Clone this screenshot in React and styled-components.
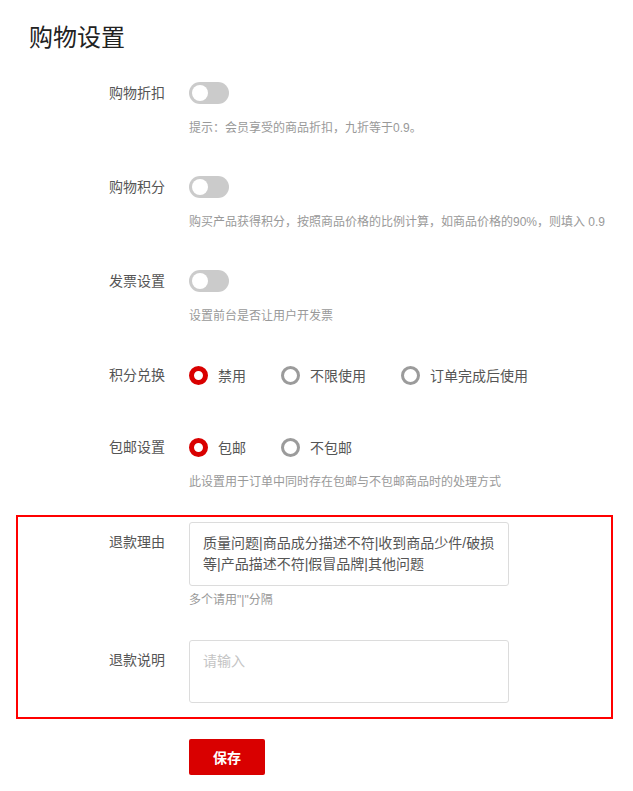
import React from "react";
import styled, { createGlobalStyle } from "styled-components";

const GlobalStyle = createGlobalStyle`
  html, body {
    margin: 0;
    padding: 0;
    background: #fff;
  }
  body {
    font-family: "Liberation Sans", "Noto Sans CJK SC", sans-serif;
  }
`;

const red = "#d90000";

const Page = styled.div`
  width: 633px;
  box-sizing: border-box;
  padding: 22px 20px 16px 16px;
`;

const Title = styled.h1`
  margin: 0 0 23px;
  padding-left: 13px;
  font-size: 24px;
  line-height: 32px;
  font-weight: normal;
  color: #222;
`;

const FormItem = styled.div`
  display: flex;
  align-items: flex-start;
  margin-bottom: ${(p) => (p.$mb !== undefined ? p.$mb : 40)}px;
`;

const Label = styled.div`
  flex: none;
  width: 173px;
  box-sizing: border-box;
  padding-right: 24px;
  text-align: right;
  font-size: 14px;
  line-height: ${(p) => p.$lh || 32}px;
  color: #555;
`;

const Control = styled.div`
  flex: 1;
  min-width: 0;
`;

const ControlLine = styled.div`
  height: 32px;
  display: flex;
  align-items: center;
`;

const Switch = styled.span`
  position: relative;
  display: inline-block;
  width: 40px;
  height: 22px;
  border-radius: 11px;
  background: ${(p) => (p.$on ? red : "#cbcbcb")};

  &::after {
    content: "";
    position: absolute;
    top: 3px;
    left: ${(p) => (p.$on ? "21px" : "3px")};
    width: 16px;
    height: 16px;
    border-radius: 50%;
    background: #fff;
  }
`;

const Hint = styled.div`
  margin: ${(p) => p.$mt || 9}px 0 ${(p) => (p.$mbn !== undefined ? p.$mbn : -7)}px;
  font-size: 12px;
  line-height: 20px;
  color: #999;
  white-space: nowrap;
`;

const RadioGroup = styled.div`
  display: flex;
  align-items: center;
  height: 32px;
`;

const RadioOption = styled.label`
  display: flex;
  align-items: center;
  margin-right: 35px;
  font-size: 14px;
  color: #555;
  cursor: pointer;
`;

const RadioDot = styled.span`
  flex: none;
  width: 19px;
  height: 19px;
  box-sizing: border-box;
  border-radius: 50%;
  border: ${(p) => (p.$checked ? `5px solid ${red}` : "3px solid #9b9b9b")};
  background: #fff;
  margin-right: 10px;
`;

const HighlightBox = styled.div`
  margin: -10px 0 20px;
  padding: 5px 0 14px;
  border: 2px solid #ff0000;

  ${Label} {
    width: 171px;
  }
`;

const TextArea = styled.textarea`
  display: block;
  width: 320px;
  height: ${(p) => p.$h || 64}px;
  box-sizing: border-box;
  padding: 10px 13px;
  border: 1px solid #dcdcdc;
  border-radius: 3px;
  resize: none;
  outline: none;
  font-family: "Liberation Sans", "Noto Sans CJK SC", sans-serif;
  font-size: 14px;
  line-height: 21px;
  color: #555;
  overflow: hidden;

  &::placeholder {
    color: #c4c4c4;
  }
`;

const SaveButton = styled.button`
  margin-left: 173px;
  width: 76px;
  height: 36px;
  border: none;
  border-radius: 2px;
  background: ${red};
  color: #fff;
  font-family: "Liberation Sans", "Noto Sans CJK SC", sans-serif;
  font-size: 14px;
  font-weight: bold;
  cursor: pointer;
`;

const switches = [
  { label: "购物折扣", hint: "提示：会员享受的商品折扣，九折等于0.9。" },
  {
    label: "购物积分",
    hint: "购买产品获得积分，按照商品价格的比例计算，如商品价格的90%，则填入 0.9",
  },
  { label: "发票设置", hint: "设置前台是否让用户开发票" },
];

const Radios = ({ options, value }) => (
  <RadioGroup>
    {options.map((o) => (
      <RadioOption key={o}>
        <RadioDot $checked={o === value} />
        {o}
      </RadioOption>
    ))}
  </RadioGroup>
);

export default function App() {
  return (
    <>
      <GlobalStyle />
      <Page>
        <Title>购物设置</Title>

        {switches.map((s) => (
          <FormItem key={s.label}>
            <Label>{s.label}</Label>
            <Control>
              <ControlLine>
                <Switch />
              </ControlLine>
              <Hint>{s.hint}</Hint>
            </Control>
          </FormItem>
        ))}

        <FormItem>
          <Label>积分兑换</Label>
          <Control>
            <Radios options={["禁用", "不限使用", "订单完成后使用"]} value="禁用" />
          </Control>
        </FormItem>

        <FormItem>
          <Label>包邮设置</Label>
          <Control>
            <Radios options={["包邮", "不包邮"]} value="包邮" />
            <Hint>此设置用于订单中同时存在包邮与不包邮商品时的处理方式</Hint>
          </Control>
        </FormItem>

        <HighlightBox>
          <FormItem $mb={30}>
            <Label $lh={40}>退款理由</Label>
            <Control>
              <TextArea
                readOnly
                defaultValue="质量问题|商品成分描述不符|收到商品少件/破损等|产品描述不符|假冒品牌|其他问题"
              />
              <Hint $mt={4} $mbn={0}>多个请用"|"分隔</Hint>
            </Control>
          </FormItem>
          <FormItem $mb={0}>
            <Label $lh={40}>退款说明</Label>
            <Control>
              <TextArea $h={63} placeholder="请输入" />
            </Control>
          </FormItem>
        </HighlightBox>

        <SaveButton>保存</SaveButton>
      </Page>
    </>
  );
}
